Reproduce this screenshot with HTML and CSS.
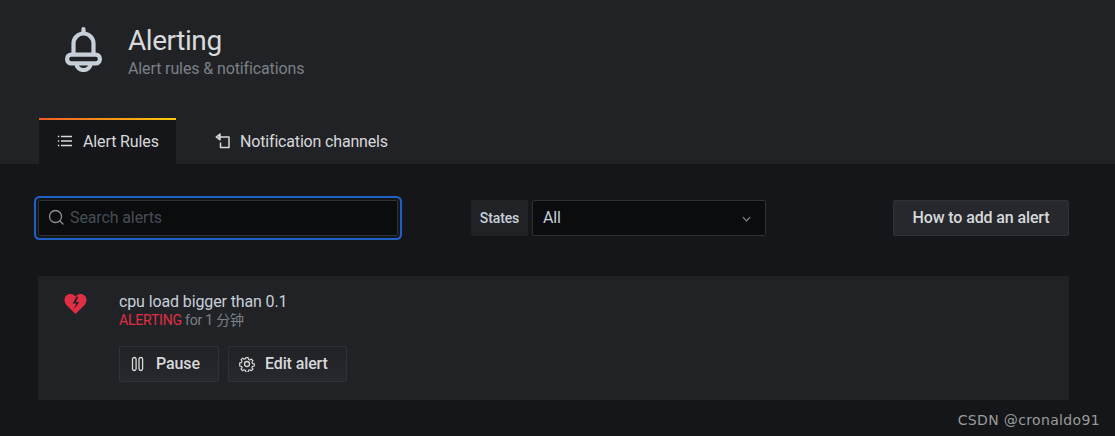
FILE: index.html
```html
<!DOCTYPE html>
<html lang="en">
<head>
<meta charset="utf-8">
<title>Alerting</title>
<link rel="stylesheet" href="styles.css">
</head>
<body>
<header class="page-header">
  <div class="title-row">
    <svg class="bell" viewBox="0 0 37 45" fill="none" stroke="#c7d0d9" stroke-width="4.200" stroke-linecap="round" stroke-linejoin="round">
      <path d="M18.500 2.100V6"/>
      <path d="M8.500 27V16.500a10 10 0 0 1 20 0V27"/>
      <rect x="2.100" y="27.600" width="32.800" height="8.800" rx="4.200"/>
      <path d="M11.500 37a7 6 0 0 0 14 0"/>
    </svg>
    <div class="title-text">
      <h1>Alerting</h1>
      <div class="subtitle">Alert rules &amp; notifications</div>
    </div>
  </div>
  <nav class="tabs">
    <a class="tab active">
      <svg class="tab-icon" viewBox="0 0 16 16" fill="none" stroke="#d8d9da" stroke-width="1.400">
        <path d="M4 3.500h11M4 8h11M4 12.500h11"/>
        <path d="M.8 3.500h1.500M.8 8h1.500M.8 12.500h1.500"/>
      </svg>
      <span>Alert Rules</span>
    </a>
    <a class="tab">
      <svg class="tab-icon" viewBox="0 0 16 16" fill="none" stroke="#d8d9da" stroke-width="1.500" stroke-linejoin="round">
        <path d="M5 1 1.200 4 5 6.800z"/>
        <path d="M3 4h11v10.500H5.500V9.500"/>
      </svg>
      <span>Notification channels</span>
    </a>
  </nav>
</header>
<main class="page-body">
  <div class="toolbar">
    <label class="search">
      <svg class="search-icon" viewBox="0 0 16 16" fill="none" stroke="#8e8e8e" stroke-width="1.300" stroke-linecap="round">
        <circle cx="7.500" cy="7.500" r="6"/>
        <path d="M12 12l3 3"/>
      </svg>
      <span class="placeholder">Search alerts</span>
    </label>
    <div class="filter">
      <span class="filter-label">States</span>
      <div class="select">
        <span>All</span>
        <svg class="chevron" viewBox="0 0 10 6" fill="none" stroke="#8e8e8e" stroke-width="1.300">
          <path d="M1 1l4 4 4-4"/>
        </svg>
      </div>
    </div>
    <button class="btn-primary">How to add an alert</button>
  </div>
  <section class="alert-card">
    <svg class="heart" viewBox="0 0 24 22">
      <path fill="#e02f44" fill-rule="evenodd" d="M12 3.200C10.600 1.300 8.800.5 6.800.5 3.200.5.500 3.200.500 6.800c0 2.500 1.200 4.500 3 6.300L12 21.500l8.500-8.400c1.800-1.800 3-3.800 3-6.300C23.500 3.200 20.800.5 17.200.5c-2 0-3.800.8-5.200 2.700zM13 3.500 9 10.500h3.800l-2.300 6 5.500-7.500h-3.700L15 3.500z"/>
    </svg>
    <div class="alert-main">
      <div class="alert-name">cpu load bigger than 0.1</div>
      <div class="alert-state"><span class="alerting">ALERTING</span> for 1 分钟</div>
      <div class="actions">
        <button class="btn-secondary btn-pause">
          <svg class="btn-icon" viewBox="0 0 16 16" fill="none" stroke="#d8d9da" stroke-width="1.300">
            <rect x="2.500" y="1.500" width="3.600" height="13" rx="1.800"/>
            <rect x="9" y="1.500" width="3.600" height="13" rx="1.800"/>
          </svg>
          <span>Pause</span>
        </button>
        <button class="btn-secondary btn-edit">
          <svg class="btn-icon" viewBox="0 0 16 16" fill="none" stroke="#d8d9da" stroke-width="1.300" stroke-linejoin="round">
            <circle cx="8" cy="8" r="2.500"/>
            <path d="M6.700 1h2.600l.4 2 1.400.6 1.700-1.100 1.800 1.800-1.100 1.700.6 1.400 2 .4v2.400l-2 .4-.6 1.400 1.100 1.700-1.800 1.800-1.700-1.100-1.400.6-.4 2H6.700l-.4-2-1.400-.6-1.700 1.100-1.800-1.800 1.100-1.700-.6-1.400-2-.4V6.800l2-.4.600-1.400-1.100-1.700 1.800-1.800 1.700 1.100 1.400-.6z" transform="translate(.8 .8) scale(.9)"/>
          </svg>
          <span>Edit alert</span>
        </button>
      </div>
    </div>
  </section>
</main>
<div class="watermark">CSDN @cronaldo91</div>
</body>
</html>
```
FILE: styles.css
```css
* { box-sizing: border-box; }
html, body { margin: 0; height: 100%; }
body {
  position: relative;
  height: 436px;
  overflow: hidden;
  background: #141619;
  color: #d8d9da;
  font-family: Roboto, "Noto Sans CJK SC", sans-serif;
  font-size: 16px;
  letter-spacing: -0.12px;
}
.page-header {
  height: 164px;
  background: #212226;
  padding: 24px 0 0 39px;
  display: flex;
  flex-direction: column;
}
.title-row {
  display: flex;
  align-items: flex-start;
  height: 94px;
  padding-left: 26px;
}
.bell { width: 37px; height: 45px; margin-top: 3px; flex: none; }
.title-text { margin-left: 26px; }
h1 {
  margin: 0;
  font-size: 28px;
  font-weight: 400;
  line-height: 33px;
  letter-spacing: -0.45px;
  color: #d8d9da;
}
.subtitle {
  margin-top: 1px;
  font-size: 16px;
  line-height: 22px;
  color: #7b8087;
}
.tabs { display: flex; height: 46px; }
.tab {
  display: flex;
  align-items: center;
  gap: 10px;
  height: 46px;
  padding: 0 17px 2px;
  border-top: 2px solid transparent;
  color: #d8d9da;
  white-space: nowrap;
}
.tab.active {
  width: 137px;
  padding-left: 18px;
  padding-right: 0;
  background: #141619;
  border-image: linear-gradient(90deg, #f05a28, #fbca0a) 1;
  border-top: 2px solid;
  border-left: 0; border-right: 0; border-bottom: 0;
  color: #d8d9da;
}
.tab:not(.active) { margin-left: 21px; padding-left: 18px; gap: 9px; letter-spacing: -0.17px; }
.tab-icon { width: 16px; height: 16px; flex: none; }
.page-body { padding: 36px 46px 0 38px; }
.toolbar { display: flex; align-items: center; height: 36px; }
.search {
  display: flex;
  align-items: center;
  width: 360px;
  height: 36px;
  padding: 0 0 2px 9px;
  background: #0b0c0e;
  border: 1px solid #2c3235;
  border-radius: 2px;
  box-shadow: 0 0 0 2px #141619, 0 0 0 4px #1f60c4;
}
.search-icon { width: 16px; height: 16px; flex: none; }
.placeholder { margin-left: 6px; color: #464c54; }
.filter { display: flex; margin-left: 73px; gap: 4px; }
.filter-label {
  display: flex;
  align-items: center;
  justify-content: center;
  width: 57px;
  height: 36px;
  background: #212226;
  border-radius: 2px;
  font-size: 14px;
  font-weight: 500;
  color: #c7d0d9;
}
.select {
  display: flex;
  align-items: center;
  justify-content: space-between;
  width: 234px;
  height: 36px;
  padding: 0 14px 2px 10px;
  background: #0b0c0e;
  border: 1px solid #2c3235;
  border-radius: 2px;
  color: #c7d0d9;
}
.chevron { width: 9px; height: 6px; margin-top: 4px; }
.btn-primary {
  margin-left: auto;
  width: 176px;
  height: 36px;
  padding: 0 0 2px;
  background: #26282d;
  border: 1px solid #2c3235;
  border-radius: 2px;
  font: 500 16px Roboto, sans-serif;
  letter-spacing: -0.12px;
  color: #d8d9da;
}
.alert-card {
  display: flex;
  margin-top: 40px;
  height: 124px;
  padding: 16px 0 0 26px;
  background: #212226;
  border-radius: 2px;
}
.heart { width: 23px; height: 22px; margin-top: 1px; flex: none; }
.alert-main { margin-left: 32px; }
.alert-name { font-size: 16px; line-height: 19px; color: #c7d0d9; }
.alert-state {
  margin-top: 0;
  font-size: 14px;
  line-height: 19px;
  letter-spacing: -0.2px;
  color: #7b8087;
}
.alerting { color: #e02f44; }
.actions { display: flex; gap: 9px; margin-top: 16px; }
.btn-secondary {
  display: flex;
  align-items: center;
  height: 36px;
  padding: 0 0 2px 10px;
  gap: 10px;
  background: linear-gradient(#212226, #25282d);
  border: 1px solid #2c3235;
  border-radius: 2px;
  font: 500 16px Roboto, sans-serif;
  letter-spacing: -0.12px;
  color: #d8d9da;
  white-space: nowrap;
}
.btn-pause { width: 100px; }
.btn-edit { width: 119px; }
.btn-icon { width: 16px; height: 16px; flex: none; margin-top: 2px; }
.watermark {
  position: absolute;
  right: 15px;
  bottom: 7px;
  font-family: "DejaVu Sans", sans-serif;
  font-size: 14px;
  line-height: 18px;
  letter-spacing: 0.35px;
  color: #9b9b9b;
}
```
